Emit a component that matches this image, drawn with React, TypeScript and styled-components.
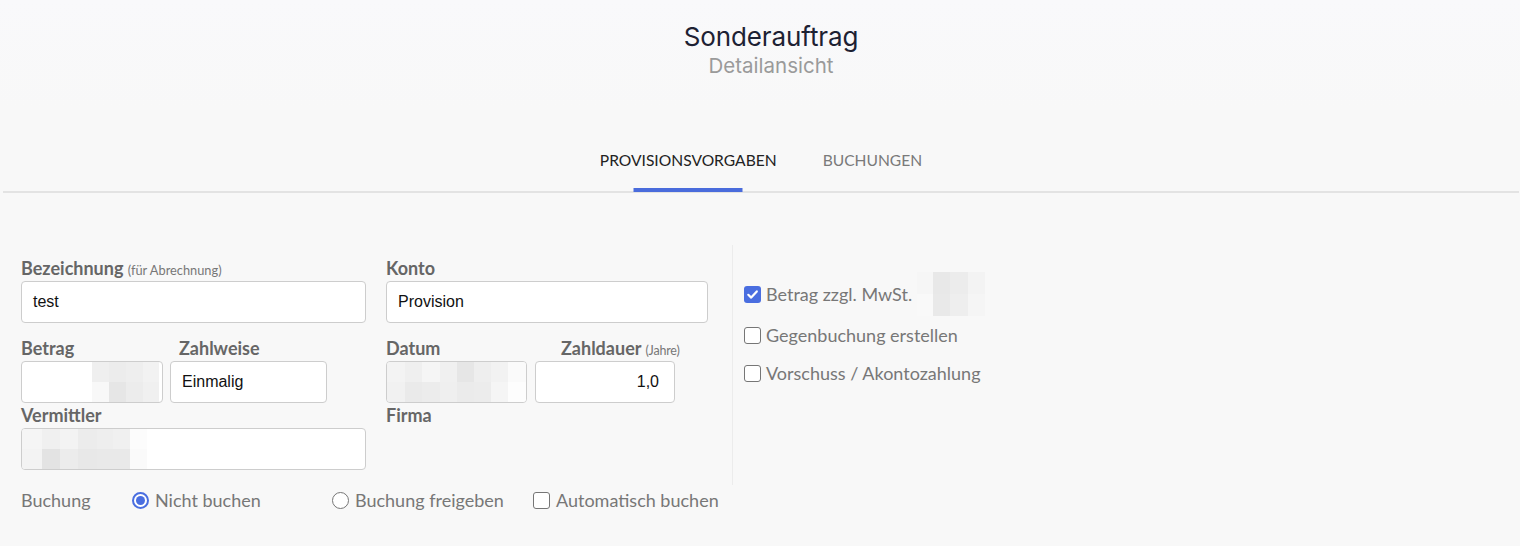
import React from "react";
import styled, { createGlobalStyle } from "styled-components";

const GlobalStyle = createGlobalStyle`
  body {
    margin: 0;
    background: #f8f8f8;
    font-family: Lato, "Liberation Sans", sans-serif;
  }
`;

// greys used for redacted (pixelated) values
const betragCells = {
  cols: [17, 17, 17, 16],
  top: ["#efefef", "#ececec", "#eeeeee", "#f2f2f2"],
  bottom: ["#f8f8f8", "#e6e6e6", "#ececec", "#f0f0f0"],
};
const datumCells = {
  cols: [18, 17, 18, 17, 17, 17, 17, 19],
  top: ["#f3f3f3", "#efefef", "#f5f5f5", "#f0f0f0", "#e6e6e6", "#eeeeee", "#f2f2f2", "#fafafa"],
  bottom: ["#f1f1f1", "#eaeaea", "#ececec", "#efefef", "#ebebeb", "#ececec", "#f5f5f5", "#fdfdfd"],
};
const vermittlerCells = {
  cols: [20, 18, 18, 19, 16, 17, 17],
  top: ["#f5f5f5", "#f0f0f0", "#f3f3f3", "#ececec", "#eeeeee", "#f0f0f0", "#fcfcfc"],
  bottom: ["#f3f3f3", "#e3e3e3", "#ececec", "#e8e8e8", "#e9e9e9", "#e9e9e9", "#fafafa"],
};
const mwstCells = {
  cols: [16, 17, 18, 17],
  top: ["#f6f6f6", "#e8e8e8", "#ececec", "#f3f3f3"],
  bottom: ["#f9f9f9", "#e9e9e9", "#eeeeee", "#f5f5f5"],
};

type CellSet = { cols: number[]; top: string[]; bottom: string[] };

const Mosaic = ({ set, height }: { set: CellSet; height: number }) => (
  <MosaicGrid $cols={set.cols} $h={height}>
    {[...set.top, ...set.bottom].map((c, i) => (
      <MosaicCell key={i} $c={c} />
    ))}
  </MosaicGrid>
);

const CheckMark = () => (
  <svg width="13" height="13" viewBox="0 0 13 13">
    <polyline
      points="2.3,6.8 5.2,9.6 10.8,3.4"
      fill="none"
      stroke="#fff"
      strokeWidth="2.2"
      strokeLinecap="round"
      strokeLinejoin="round"
    />
  </svg>
);

const App = () => {
  return (
    <>
      <GlobalStyle />
      <Header>
        <Title>Sonderauftrag</Title>
        <SubTitle>Detailansicht</SubTitle>
      </Header>

      <TabBar>
        <Tab $active>PROVISIONSVORGABEN</Tab>
        <Tab>BUCHUNGEN</Tab>
      </TabBar>

      <Content>
        <FormArea>
          <FormGrid>
            <Field>
              <Label>
                Bezeichnung <Hint>(für Abrechnung)</Hint>
              </Label>
              <InputBox>test</InputBox>
            </Field>
            <Field>
              <Label>Konto</Label>
              <InputBox>Provision</InputBox>
            </Field>

            <Pair $top={13} $gap={7}>
              <Field $w={142}>
                <Label>Betrag</Label>
                <InputBox $pad={0} $right>
                  <Mosaic set={betragCells} height={40} />
                  <Spacer $w={3} />
                </InputBox>
              </Field>
              <Field $w={157}>
                <Label $indent={9}>Zahlweise</Label>
                <InputBox>Einmalig</InputBox>
              </Field>
            </Pair>
            <Pair $top={13} $gap={8}>
              <Field $w={141}>
                <Label>Datum</Label>
                <InputBox $pad={0} $muted>
                  <Mosaic set={datumCells} height={40} />
                </InputBox>
              </Field>
              <Field $w={140}>
                <Label $indent={26}>
                  Zahldauer <Hint $narrow>(Jahre)</Hint>
                </Label>
                <InputBox $right $pad={15}>1,0</InputBox>
              </Field>
            </Pair>

            <Field>
              <Label>Vermittler</Label>
              <InputBox $pad={0}>
                <Mosaic set={vermittlerCells} height={40} />
              </InputBox>
            </Field>
            <Field>
              <Label>Firma</Label>
            </Field>
          </FormGrid>

          <BookingRow>
            <BookingLabel>Buchung</BookingLabel>
            <Option>
              <Radio $on />
              Nicht buchen
            </Option>
            <Option>
              <Radio />
              Buchung freigeben
            </Option>
            <Option>
              <Check />
              Automatisch buchen
            </Option>
          </BookingRow>
        </FormArea>

        <SidePanel>
          <CheckRow $h={44}>
            <Check $on>
              <CheckMark />
            </Check>
            <CheckText $w={146}>Betrag zzgl. MwSt.</CheckText>
            <Mosaic set={mwstCells} height={44} />
          </CheckRow>
          <CheckRow $h={38}>
            <Check />
            <CheckText>Gegenbuchung erstellen</CheckText>
          </CheckRow>
          <CheckRow $h={38}>
            <Check />
            <CheckText>Vorschuss / Akontozahlung</CheckText>
          </CheckRow>
        </SidePanel>
      </Content>
    </>
  );
};

const Header = styled.header`
  box-sizing: border-box;
  height: 110px;
  padding: 20px 0 0 22px;
  text-align: center;
  background: linear-gradient(#f9f9fb, #f8f8f8);
`;

const Title = styled.h1`
  margin: 0;
  font-family: Inter, "Noto Sans", sans-serif;
  font-weight: 400;
  font-size: 26px;
  line-height: 34px;
  letter-spacing: -0.1px;
  color: #1d2133;
`;

const SubTitle = styled.h2`
  margin: 0;
  font-family: Inter, "Noto Sans", sans-serif;
  font-weight: 400;
  font-size: 20.5px;
  line-height: 24px;
  color: #9a9a9a;
`;

const TabBar = styled.nav`
  display: flex;
  justify-content: center;
  margin: 0 1px 0 3px;
  border-bottom: 2px solid #e3e3e3;
`;

const Tab = styled.div<{ $active?: boolean }>`
  position: relative;
  padding: 40px 23px 21px;
  font-size: 15.6px;
  line-height: 20px;
  color: ${(p) => (p.$active ? "#222" : "#7a7a7a")};
  &::after {
    content: "";
    display: ${(p) => (p.$active ? "block" : "none")};
    position: absolute;
    left: 50%;
    bottom: -1px;
    width: 109px;
    height: 4px;
    transform: translateX(-50%);
    background: #4a6cdc;
  }
`;

const Content = styled.main`
  display: flex;
  padding: 52px 0 0 21px;
`;

const FormArea = styled.section`
  box-sizing: border-box;
  width: 711px;
  padding-top: 11px;
`;

const FormGrid = styled.div`
  display: grid;
  grid-template-columns: 345px 322px;
  column-gap: 20px;
`;

const Field = styled.div<{ $w?: number }>`
  display: flex;
  flex-direction: column;
  width: ${(p) => (p.$w ? `${p.$w}px` : "auto")};
`;

const Pair = styled.div<{ $top: number; $gap: number }>`
  display: flex;
  gap: ${(p) => p.$gap}px;
  margin-top: ${(p) => p.$top}px;
`;

const Label = styled.label<{ $indent?: number }>`
  display: block;
  height: 24px;
  padding-left: ${(p) => p.$indent ?? 0}px;
  font-size: 18px;
  font-weight: 700;
  line-height: 24px;
  color: #666;
  white-space: nowrap;
`;

const Hint = styled.span<{ $narrow?: boolean }>`
  font-size: ${(p) => (p.$narrow ? 12.5 : 12.8)}px;
  line-height: 1;
  font-weight: 400;
  color: #777;
  letter-spacing: ${(p) => (p.$narrow ? "-0.2px" : "0")};
`;

const InputBox = styled.div<{ $pad?: number; $right?: boolean; $muted?: boolean }>`
  box-sizing: border-box;
  height: 42px;
  margin-top: 1px;
  display: flex;
  align-items: center;
  justify-content: ${(p) => (p.$right ? "flex-end" : "flex-start")};
  padding: 0 ${(p) => p.$pad ?? 11}px;
  border: 1px solid #cdcdcd;
  border-radius: 4px;
  background: ${(p) => (p.$muted ? "#f7f7f7" : "#fff")};
  overflow: hidden;
  font-family: "Liberation Sans", Arial, sans-serif;
  font-size: 16px;
  color: #111;
`;

const Spacer = styled.span<{ $w: number }>`
  flex: 0 0 ${(p) => p.$w}px;
`;

const MosaicGrid = styled.div<{ $cols: number[]; $h: number }>`
  display: grid;
  grid-template-columns: ${(p) => p.$cols.map((c) => `${c}px`).join(" ")};
  grid-template-rows: 1fr 1fr;
  height: ${(p) => p.$h}px;
  flex-shrink: 0;
`;

const MosaicCell = styled.span<{ $c: string }>`
  background: ${(p) => p.$c};
`;

const BookingRow = styled.div`
  display: grid;
  grid-template-columns: 111px 200px 201px auto;
  align-items: center;
  margin-top: 18px;
  height: 24px;
  font-size: 18px;
  color: #777;
`;

const BookingLabel = styled.span`
  color: #777;
`;

const Option = styled.label`
  display: flex;
  align-items: center;
  gap: 6px;
  white-space: nowrap;
`;

const Radio = styled.span<{ $on?: boolean }>`
  box-sizing: border-box;
  width: 17px;
  height: 17px;
  border-radius: 50%;
  border: ${(p) => (p.$on ? "2px solid #4a6ee0" : "1.5px solid #767676")};
  background: #fff;
  display: flex;
  align-items: center;
  justify-content: center;
  &::after {
    content: "";
    display: ${(p) => (p.$on ? "block" : "none")};
    width: 9px;
    height: 9px;
    border-radius: 50%;
    background: #4a6ee0;
  }
`;

const Check = styled.span<{ $on?: boolean }>`
  box-sizing: border-box;
  flex: 0 0 17px;
  width: 17px;
  height: 17px;
  border-radius: 3px;
  border: ${(p) => (p.$on ? "none" : "1.5px solid #767676")};
  background: ${(p) => (p.$on ? "#4a6ee0" : "#fff")};
  display: flex;
  align-items: center;
  justify-content: center;
`;

const SidePanel = styled.aside`
  box-sizing: border-box;
  height: 240px;
  padding: 27px 0 0 11px;
  border-left: 1px solid #ececec;
`;

const CheckRow = styled.div<{ $h: number }>`
  display: flex;
  align-items: center;
  gap: 5px;
  height: ${(p) => p.$h}px;
`;

const CheckText = styled.span<{ $w?: number }>`
  flex: ${(p) => (p.$w ? `0 0 ${p.$w}px` : "0 0 auto")};
  font-size: 18px;
  color: #777;
  white-space: nowrap;
`;

export default App;
